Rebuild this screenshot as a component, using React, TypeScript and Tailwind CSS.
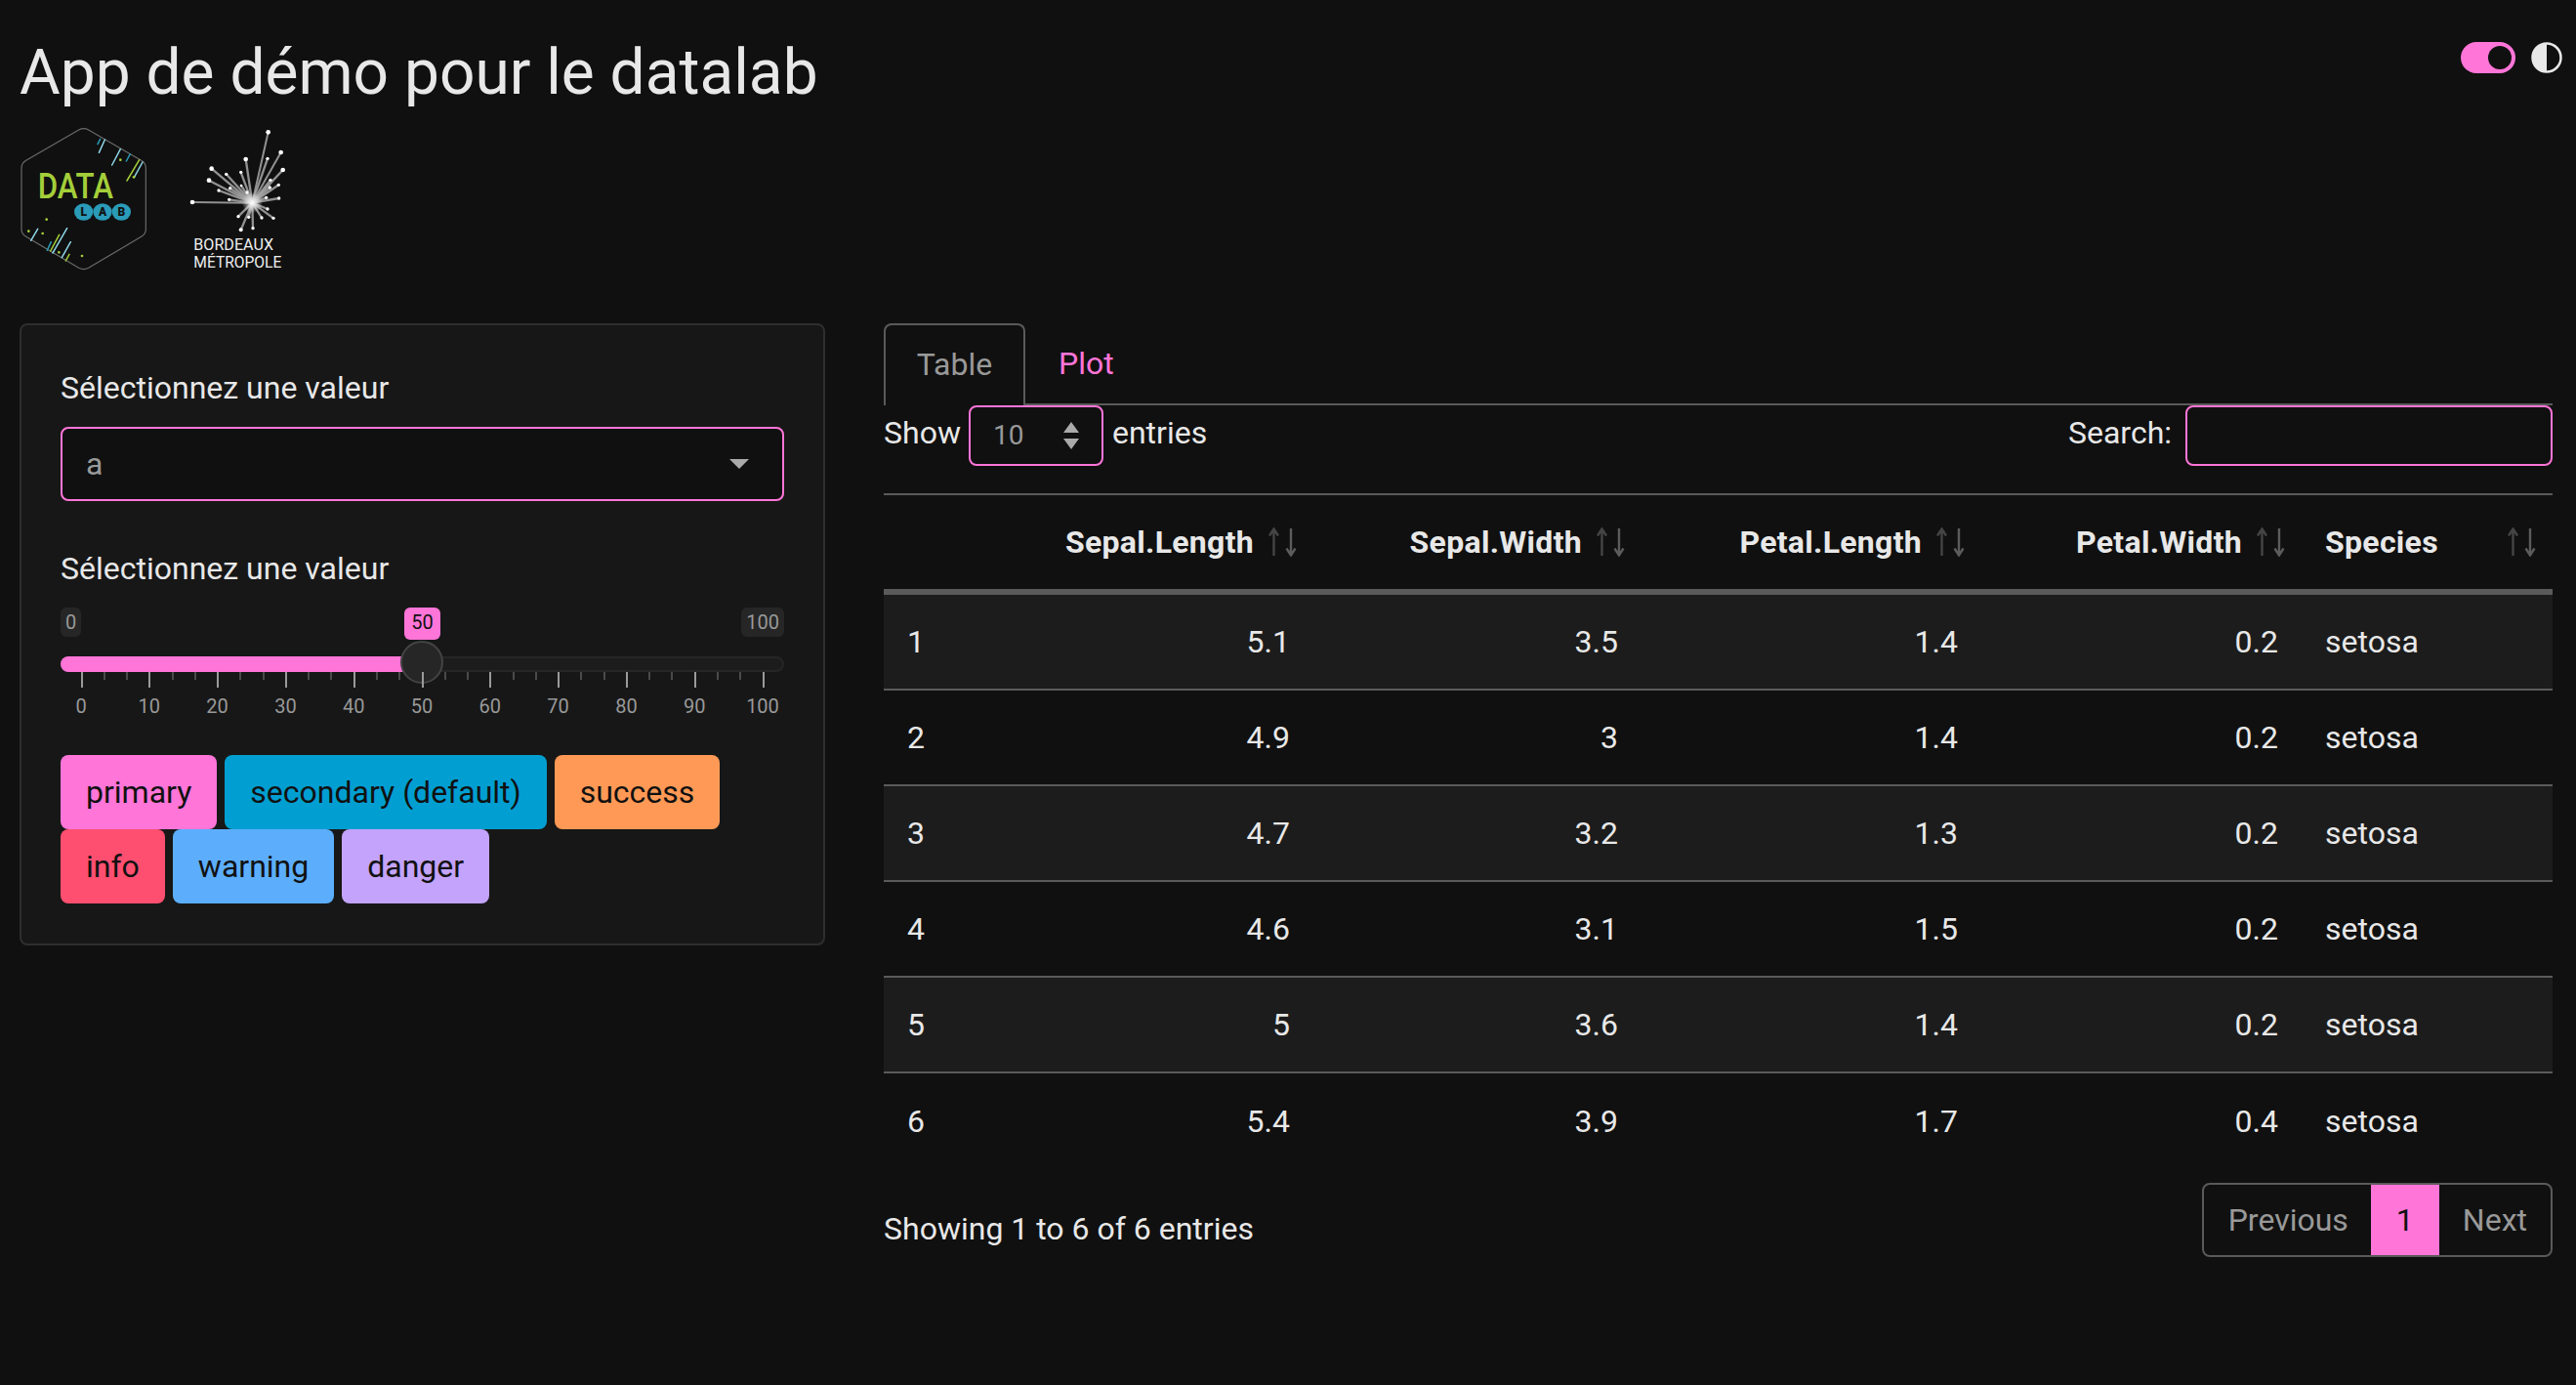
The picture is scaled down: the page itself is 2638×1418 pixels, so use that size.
import React from "react";

function SortIcon() {
  return (
    <svg width="29" height="30" viewBox="0 0 29 30" className="shrink-0" fill="none">
      <path d="M5.5 29V2M1 8.5L5.5 1.5L10 8.5" stroke="#454545" strokeWidth="2.4" />
      <path d="M23 1V28M18.5 21.5L23 28.5L27.5 21.5" stroke="#5c5c5c" strokeWidth="2.4" />
    </svg>
  );
}

function DataLabLogo() {
  const blue = "#8fd6e6";
  const teal = "#2a9bb8";
  const lime = "#a4cf3a";
  const lines: [number, number, number, number, string][] = [
    [270, 80, 278, 64, teal], [274, 106, 292, 66, blue], [314, 144, 340, 95, blue], [358, 132, 370, 110, teal],
    [360, 192, 398, 128, lime], [382, 182, 408, 135, blue], [65, 376, 86, 340, blue], [115, 406, 127, 380, teal],
    [125, 408, 152, 358, lime], [132, 414, 176, 338, blue], [160, 428, 187, 380, blue], [172, 438, 183, 418, lime],
  ];
  const dots: [number, number, string][] = [
    [340, 128, lime], [113, 311, lime], [58, 347, lime], [101, 354, lime], [151, 412, lime], [222, 423, lime], [381, 181, lime],
  ];
  return (
    <svg width="160" height="160" viewBox="0 0 480 480" className="shrink-0" style={{ marginLeft: -10 }}>
      <path
        d="M212 36Q227 28 242 36L404 130Q418 138 418 154V342Q418 356 404 364L242 460Q227 468 212 460L50 364Q36 356 36 342V154Q36 138 50 130Z"
        fill="none"
        stroke="#6b6b6b"
        strokeWidth="3.5"
      />
      {lines.map(([a, b, c, d, col], i) => (
        <line key={i} x1={a} y1={b} x2={c} y2={d} stroke={col} strokeWidth="4.5" strokeLinecap="round" />
      ))}
      {dots.map(([a, b, col], i) => (
        <circle key={i} cx={a} cy={b} r="4" fill={col} />
      ))}
      <text x="86" y="246" fill={lime} fontFamily="Roboto" fontWeight="500" fontSize="110" textLength="232" lengthAdjust="spacingAndGlyphs">DATA</text>
      <ellipse cx="227" cy="288" rx="29" ry="26" fill={teal} />
      <ellipse cx="285" cy="288" rx="29" ry="26" fill={teal} />
      <ellipse cx="343" cy="288" rx="29" ry="26" fill={teal} />
      <text x="227" y="301" textAnchor="middle" fill="#111" fontFamily="Roboto" fontWeight="900" fontSize="36">L</text>
      <text x="285" y="301" textAnchor="middle" fill="#111" fontFamily="Roboto" fontWeight="900" fontSize="36">A</text>
      <text x="343" y="301" textAnchor="middle" fill="#111" fontFamily="Roboto" fontWeight="900" fontSize="36">B</text>
    </svg>
  );
}

function BordeauxLogo() {
  const pts: [number, number, number][] = [
    [284, 43, 7], [323, 105, 7], [329, 159, 7], [282, 124, 5], [215, 126, 7], [200, 166, 5], [155, 172, 5],
    [110, 155, 7], [102, 191, 7], [132, 222, 5], [167, 215, 5], [201, 207, 4], [219, 228, 5], [164, 250, 5],
    [51, 258, 7], [291, 190, 5], [289, 213, 5], [316, 205, 5], [278, 244, 5], [317, 246, 5], [282, 279, 5],
    [300, 307, 5], [264, 306, 5], [237, 338, 5], [200, 343, 6], [224, 304, 5], [192, 302, 5],
  ];
  return (
    <svg width="130" height="160" viewBox="0 0 390 480" className="shrink-0">
      <defs>
        <radialGradient id="glow" cx="50%" cy="50%" r="50%">
          <stop offset="0%" stopColor="#ffffff" />
          <stop offset="100%" stopColor="#ffffff" stopOpacity="0" />
        </radialGradient>
      </defs>
      {pts.map(([x, y], i) => (
        <line key={i} x1="235" y1="260" x2={x} y2={y} stroke="#a8a8a8" strokeWidth={x === 51 || y < 110 ? 6 : 7} strokeOpacity="0.85" />
      ))}
      {pts.map(([x, y, r], i) => (
        <circle key={i} cx={x} cy={y} r={r} fill="#fff" />
      ))}
      <circle cx="235" cy="260" r="32" fill="url(#glow)" />
      <text x="55" y="405" fill="#eee" fontFamily="Roboto" fontSize="52" textLength="245" lengthAdjust="spacingAndGlyphs">BORDEAUX</text>
      <text x="55" y="460" fill="#eee" fontFamily="Roboto" fontSize="52" textLength="270" lengthAdjust="spacingAndGlyphs">MÉTROPOLE</text>
    </svg>
  );
}

function Slider() {
  const ticks = Array.from({ length: 31 }, (_, i) => i);
  return (
    <div className="mt-[16px]">
      <div className="relative h-[30px] text-[20px] leading-[30px] text-[#999]">
        <span className="absolute left-0 top-0 rounded-[6px] bg-[#262626] px-[5px]">0</span>
        <span className="absolute right-0 top-0 rounded-[6px] bg-[#262626] px-[5px]">100</span>
        <span className="absolute left-[352px] top-0 h-[33px] w-[37px] rounded-[6px] bg-[#ff75d8] text-center text-[#111]">50</span>
      </div>
      <div className="relative mt-[20px] h-[16px] rounded-full border-2 border-[#262626] bg-[#1c1c1c]">
        <div className="absolute left-[-2px] top-[-2px] h-[16px] w-[372px] rounded-l-full bg-[#ff75d8]" />
        <div className="absolute left-[346px] top-[-18px] h-[44px] w-[44px] rounded-full border-2 border-[#444] bg-[#262626]" />
      </div>
      <div className="relative h-[16px]">
        {ticks.map((i) => {
          const major = i % 3 === 0;
          return (
            <div
              key={i}
              className={major ? "absolute top-0 h-[16px] w-[2px] bg-[#9a9a9a]" : "absolute top-0 h-[8px] w-[2px] bg-[#4a4a4a]"}
              style={{ left: 20.5 + (i * 698) / 30 }}
            />
          );
        })}
      </div>
      <div className="relative mt-[7px] h-[24px] text-[20px] leading-[24px] text-[#999]">
        {ticks.filter((i) => i % 3 === 0).map((i) => (
          <span key={i} className="absolute w-[60px] text-center" style={{ left: 21 + (i * 698) / 30 - 30 }}>
            {(i / 3) * 10}
          </span>
        ))}
      </div>
    </div>
  );
}

function Btn({ children, className }: { children: React.ReactNode; className: string }) {
  return (
    <button className={"h-[76px] rounded-[8px] px-[26px] text-[32px] text-[#111] " + className}>{children}</button>
  );
}

const rows = [
  ["1", "5.1", "3.5", "1.4", "0.2"],
  ["2", "4.9", "3", "1.4", "0.2"],
  ["3", "4.7", "3.2", "1.3", "0.2"],
  ["4", "4.6", "3.1", "1.5", "0.2"],
  ["5", "5", "3.6", "1.4", "0.2"],
  ["6", "5.4", "3.9", "1.7", "0.4"],
];

function Th({ label, left }: { label: string; left?: boolean }) {
  return (
    <th className="p-0 font-bold tracking-[0.3px]">
      <div className={"flex h-[96px] items-center gap-[15px] pl-[24px] pr-[17px] " + (left ? "justify-between" : "justify-end")}>
        <span>{label}</span>
        <SortIcon />
      </div>
    </th>
  );
}

export default function App() {
  return (
    <div
      className="relative min-h-[1418px] bg-[#101010] pl-[20px] pr-[24px] text-[32px] leading-[48px] text-[#e8e8e8]"
      style={{ fontFamily: "Roboto, sans-serif" }}
    >
      <div className="absolute right-[14px] top-[43px] flex items-center gap-[16px]">
        <div className="flex h-[32px] w-[56px] items-center justify-end rounded-full bg-[#ff75d8] pr-[4px]">
          <div className="h-[24px] w-[24px] rounded-full bg-[#101010]" />
        </div>
        <svg width="32" height="32" viewBox="0 0 32 32">
          <circle cx="16" cy="16" r="14.5" fill="#101010" stroke="#e8e8e8" strokeWidth="2.5" />
          <path d="M16 1.5A14.5 14.5 0 0 0 16 30.5Z" fill="#e8e8e8" />
        </svg>
      </div>

      <h2 className="pt-[36px] text-[64px] font-normal leading-[77px]">App de démo pour le datalab</h2>

      <div className="mt-[8px] flex h-[160px] items-start gap-[10px]">
        <DataLabLogo />
        <BordeauxLogo />
      </div>

      <div className="mt-[50px] flex items-start gap-[60px]">
        <aside className="h-[637px] w-[825px] shrink-0 rounded-[8px] border-2 border-[#2e2e2e] bg-[#171717] px-[40px] pt-[40px]">
          <label className="block leading-[48px]">Sélectionnez une valeur</label>
          <div className="mt-[16px] flex h-[76px] items-center justify-between rounded-[8px] border-2 border-[#ff75d8] bg-[#101010] pl-[24px] pr-[34px] text-[#999]">
            <span>a</span>
            <span className="h-0 w-0 border-x-[10px] border-t-[10px] border-x-transparent border-t-[#aaa]" />
          </div>
          <label className="mt-[45px] block leading-[48px]">Sélectionnez une valeur</label>
          <Slider />
          <div className="mt-[38px] flex flex-wrap gap-x-[8px]">
            <Btn className="bg-[#ff75d8]">primary</Btn>
            <Btn className="bg-[#019fd1]">secondary (default)</Btn>
            <Btn className="bg-[#ff9955]">success</Btn>
            <Btn className="bg-[#ff4f70]">info</Btn>
            <Btn className="bg-[#5caefc]">warning</Btn>
            <Btn className="bg-[#c3a3fb]">danger</Btn>
          </div>
        </aside>

        <main className="min-w-0 flex-1">
          <div className="flex h-[84px] items-end border-b-2 border-[#5a5a5a]">
            <div className="mb-[-2px] flex h-[84px] w-[145px] items-center justify-center rounded-t-[8px] border-2 border-b-0 border-[#5a5a5a] bg-[#101010] pb-[2px] text-[#999]">
              Table
            </div>
            <div className="flex h-[82px] items-center px-[34px] text-[#ff75d8]">Plot</div>
          </div>

          <div className="flex h-[90px] items-start justify-between">
            <div className="flex items-center">
              <span className="mb-[7px]">Show</span>
              <div className="ml-[8px] mr-[9px] flex h-[62px] w-[138px] items-center justify-between rounded-[8px] border-2 border-[#ff75d8] pl-[23px] pr-[22px] text-[28px] text-[#999]">
                <span>10</span>
                <svg width="18" height="32" viewBox="0 0 18 32">
                  <path d="M9 2L17 13H1Z M9 30L1 19H17Z" fill="#aaa" />
                </svg>
              </div>
              <span className="mb-[7px]">entries</span>
            </div>
            <div className="flex items-center gap-[14px]">
              <span className="mb-[7px]">Search:</span>
              <div className="h-[62px] w-[376px] rounded-[8px] border-2 border-[#ff75d8]" />
            </div>
          </div>

          <table className="w-[1709px] table-fixed border-collapse">
            <colgroup>
              <col className="w-[163px]" />
              <col className="w-[277px]" />
              <col className="w-[336px]" />
              <col className="w-[348px]" />
              <col className="w-[328px]" />
              <col className="w-[257px]" />
            </colgroup>
            <thead>
              <tr className="border-y-2 border-b-[6px] border-y-[#5a5a5a]">
                <th className="p-0" />
                <Th label="Sepal.Length" />
                <Th label="Sepal.Width" />
                <Th label="Petal.Length" />
                <Th label="Petal.Width" />
                <Th label="Species" left />
              </tr>
            </thead>
            <tbody>
              {rows.map((r, i) => (
                <tr key={r[0]} className={i % 2 === 0 ? "border-b-2 border-b-[#5a5a5a] bg-[#1c1c1c]" : i === 5 ? "" : "border-b-2 border-b-[#5a5a5a]"}>
                  {r.map((c, j) => (
                    <td key={j} className={(i === 0 ? "h-[100px] " : "h-[98px] ") + "px-[24px] " + (j === 0 ? "text-left" : "text-right")}>
                      {c}
                    </td>
                  ))}
                  <td className={(i === 0 ? "h-[100px] " : "h-[98px] ") + "px-[24px] text-left"}>setosa</td>
                </tr>
              ))}
            </tbody>
          </table>

          <div className="mt-[15px] flex items-start justify-between">
            <span className="mt-[23px]">Showing 1 to 6 of 6 entries</span>
            <div className="flex h-[76px] items-stretch overflow-hidden rounded-[8px] border-2 border-[#5a5a5a] text-[#999]">
              <span className="flex items-center pl-[25px] pr-[23px]">Previous</span>
              <span className="my-[-2px] flex w-[70px] items-center justify-center bg-[#ff75d8] text-[#111]">1</span>
              <span className="flex items-center px-[24px]">Next</span>
            </div>
          </div>
        </main>
      </div>
    </div>
  );
}
